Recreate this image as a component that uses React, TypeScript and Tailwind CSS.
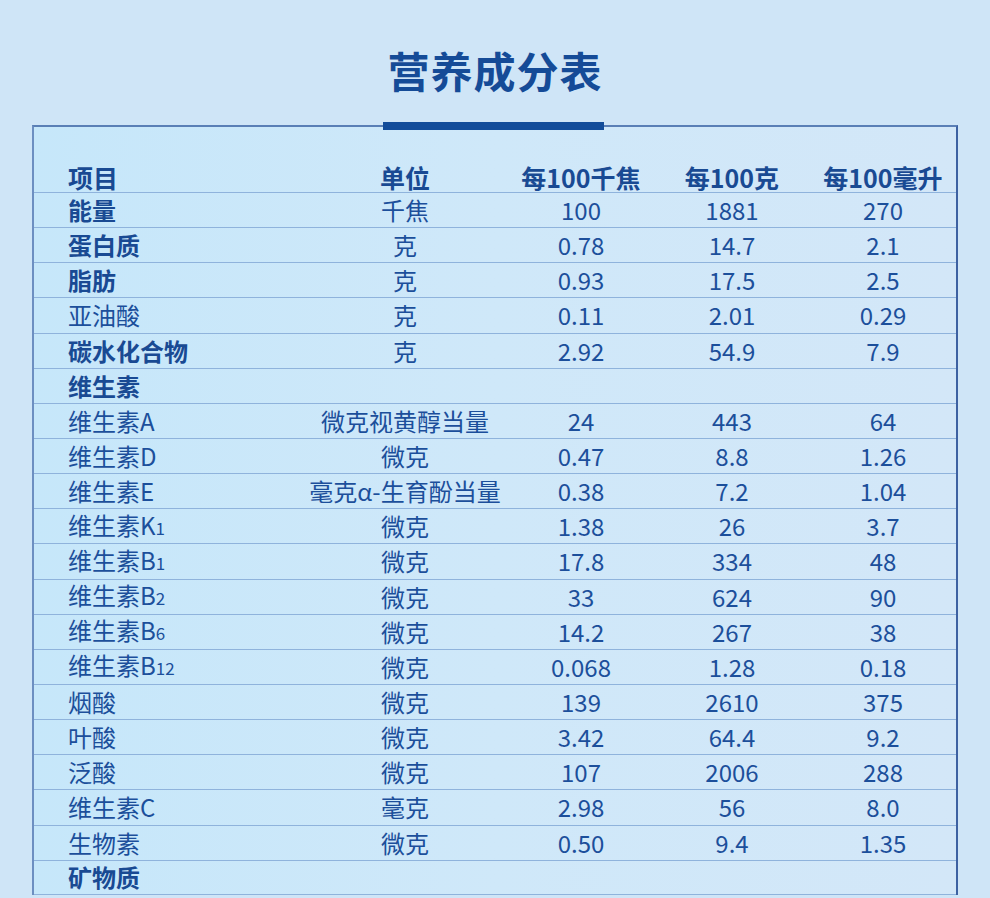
import React from 'react';

type Row = {
  name: React.ReactNode;
  unit?: string;
  a?: string;
  b?: string;
  c?: string;
  bold?: boolean;
};

const sub = (base: string, s: string) => (
  <>
    {base}
    <span className="text-[17px]">{s}</span>
  </>
);

const rows: Row[] = [
  { name: '能量', unit: '千焦', a: '100', b: '1881', c: '270', bold: true },
  { name: '蛋白质', unit: '克', a: '0.78', b: '14.7', c: '2.1', bold: true },
  { name: '脂肪', unit: '克', a: '0.93', b: '17.5', c: '2.5', bold: true },
  { name: '亚油酸', unit: '克', a: '0.11', b: '2.01', c: '0.29' },
  { name: '碳水化合物', unit: '克', a: '2.92', b: '54.9', c: '7.9', bold: true },
  { name: '维生素', bold: true },
  { name: '维生素A', unit: '微克视黄醇当量', a: '24', b: '443', c: '64' },
  { name: '维生素D', unit: '微克', a: '0.47', b: '8.8', c: '1.26' },
  { name: '维生素E', unit: '毫克α-生育酚当量', a: '0.38', b: '7.2', c: '1.04' },
  { name: sub('维生素K', '1'), unit: '微克', a: '1.38', b: '26', c: '3.7' },
  { name: sub('维生素B', '1'), unit: '微克', a: '17.8', b: '334', c: '48' },
  { name: sub('维生素B', '2'), unit: '微克', a: '33', b: '624', c: '90' },
  { name: sub('维生素B', '6'), unit: '微克', a: '14.2', b: '267', c: '38' },
  { name: sub('维生素B', '12'), unit: '微克', a: '0.068', b: '1.28', c: '0.18' },
  { name: '烟酸', unit: '微克', a: '139', b: '2610', c: '375' },
  { name: '叶酸', unit: '微克', a: '3.42', b: '64.4', c: '9.2' },
  { name: '泛酸', unit: '微克', a: '107', b: '2006', c: '288' },
  { name: '维生素C', unit: '毫克', a: '2.98', b: '56', c: '8.0' },
  { name: '生物素', unit: '微克', a: '0.50', b: '9.4', c: '1.35' },
  { name: '矿物质', bold: true },
];

const grid = 'grid grid-cols-[257px_228px_124px_178px_124px]';

export default function App() {
  return (
    <div
      className="min-h-[898px] bg-[#cfe5f7] text-[#1c4f9b]"
      style={{ fontFamily: '"Noto Sans CJK SC", "Noto Sans", sans-serif' }}
    >
      <div className="pt-[44px] flex justify-center">
        <h1 className="text-[42px] leading-[52px] font-bold text-[#154b97] tracking-[1px]">营养成分表</h1>
      </div>

      <div className="relative mt-[29px] ml-[32px] w-[926px] border-t-2 border-l-2 border-r-2 border-t-[#5a7fb6] border-l-[#6d8fc1] border-r-[#3d61a2] bg-gradient-to-r from-[#c6e7fa] via-[#cfe8f9] to-[#d3e7f8]">
        <div className="absolute left-[349px] top-[-5px] h-[8px] w-[221px] bg-[#124c9a]" />

        <div className={`${grid} h-[65px] items-end pb-[2px] text-[25px] leading-[26px] font-bold text-[#194a93]`}>
          <div className="pl-[34px]">项目</div>
          <div className="text-center">单位</div>
          <div className="text-center">每100千焦</div>
          <div className="text-center">每100克</div>
          <div className="text-center">每100毫升</div>
        </div>

        {rows.map((r, i) => (
          <div
            key={i}
            className={`${grid} h-[35.15px] items-center border-t border-[#8fb3dc] text-[24px] leading-[30px] ${
              i === rows.length - 1 ? 'border-b' : ''
            }`}
          >
            <div className={`pl-[34px] whitespace-nowrap ${r.bold ? 'font-bold text-[#194a93]' : ''}`}>{r.name}</div>
            <div className="text-center whitespace-nowrap">{r.unit}</div>
            <div className="text-center">{r.a}</div>
            <div className="text-center">{r.b}</div>
            <div className="text-center">{r.c}</div>
          </div>
        ))}
      </div>
    </div>
  );
}
